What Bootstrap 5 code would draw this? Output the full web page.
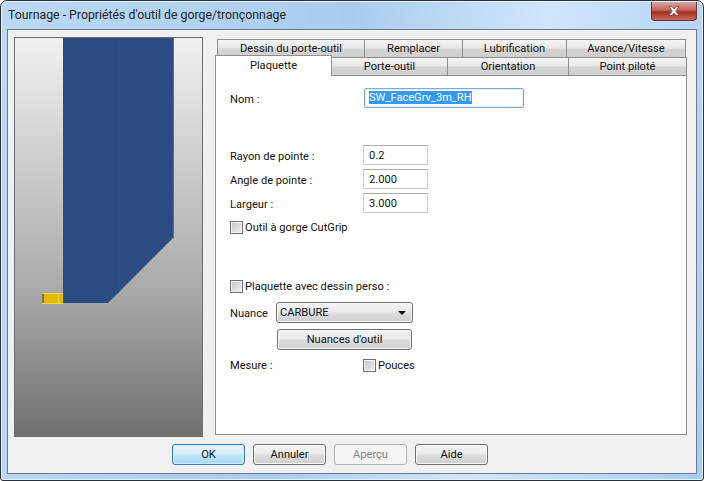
<!DOCTYPE html>
<html lang="fr">
<head>
<meta charset="utf-8">
<title>Tournage</title>
<link href="https://cdn.jsdelivr.net/npm/bootstrap@5.3.0/dist/css/bootstrap.min.css" rel="stylesheet">
<style>
html,body{margin:0;height:100%;background:#fff;overflow:hidden}
body{font:11.100px/15px Roboto,Lato,sans-serif;color:#111}
.win{width:704px;height:481px;border:1px solid #2c3138;border-radius:7px 7px 3px 3px;padding:0 6px 6px;background:linear-gradient(100deg,#bcd9f2 0%,#a9cdee 45%,#cfe6fb 70%,#a8cdf0 100%);box-shadow:inset 0 0 0 1px #e6f1fb}
.wbar{height:28px;padding:7px 1px 0;font-size:12.300px;color:#222}
.xbtn{position:absolute;right:6px;top:1px;width:46px;height:19px;border:1px solid #6b3030;border-top:0;border-radius:0 0 4px 4px;background:linear-gradient(#d8a69e,#c4645a 45%,#a52e22 55%,#c66a5c);display:flex;align-items:center;justify-content:center}
.client{height:445px;background:#f0f0f0;border:1px solid #6e7a8a;padding:7px 9px 0 6px}
.upper{height:400px}
.preview{width:189px;height:400px;border:1px solid #6d6d6d;background:linear-gradient(#f0f0f0,#a8a8a8 65%,#707070)}
.preview svg{display:block}
.tabbox{width:473px;margin-left:12px;padding-top:2px}
.tabrow{display:flex;height:18px;padding-left:2px;position:relative}
.tabitem{border:1px solid #8f8f8f;border-bottom:0;background:linear-gradient(#f4f4f4,#e8e8e8 45%,#d4d4d4 55%,#cfcfcf);text-align:center;line-height:17px;margin-right:-1px;flex:none}
.tabactive{position:absolute;left:0;top:-2px;height:21px;width:117px;background:#fff;border:1px solid #8f8f8f;border-bottom:0;z-index:2;text-align:center;line-height:19px}
.tabpage{height:360px;background:#fff;border:1px solid #8f8f8f;padding:0 14px;position:relative}
.frow{display:flex;align-items:center}
.lbl{flex:none}
.lblpad{padding-top:2px}
.field{width:65px;height:20px;border:1px solid #ccc;border-top-color:#aaa;padding:0 0 0 5px;font:inherit;color:#111;border-radius:1px;background:#fff;display:block;line-height:20px}
.namefield{width:160px;border:1px solid #7fa9d3;border-radius:2px;padding-left:4px;box-shadow:inset 0 0 0 1px #e2edf7;line-height:18px}
.sel{background:#3399ff;color:#fff}
.chk{width:13px;height:13px;border:1px solid #707070;background:linear-gradient(135deg,#c4c4c4,#f2f2f2);box-shadow:inset 0 0 0 1px #f4f4f4;flex:none;margin-right:2px}
.winbtn{width:73px;height:21px;border:1px solid #707070;border-radius:3px;background:linear-gradient(#f3f3f3,#ebebeb 45%,#dcdcdc 55%,#cfcfcf);box-shadow:inset 0 0 0 1px #f7f7f7;font:inherit;color:#111;padding:0;line-height:17px}
.comboish{width:137px;display:flex;align-items:center;justify-content:space-between;padding:0 4px 0 3px;text-align:left}
.caret-d{width:0;height:0;border:4px solid transparent;border-top:4px solid #111;border-bottom:0;margin-right:2px}
.okbtn{border-color:#3c7fb1;background:linear-gradient(#e9f5fc,#d9eefa 45%,#bee6fd 55%,#a7d9f5);box-shadow:inset 0 0 0 1px #cdeaf9}
.off{border-color:#adb2b5;background:#f4f4f4;color:#838383}
.bottombar{height:37px;padding-top:7px;padding-left:158px;gap:8px}
.h1r{height:20px;margin-top:12px}
.w134{width:134px}
.w133{width:133px}
.mt-a{margin-top:37px}
.mt-b{margin-top:4px}
.mt-c{margin-top:7px}
.mt-d{margin-top:44px}
.mt-e{margin-top:8px}
.mt-f{margin-top:6px}
.mt-g{margin-top:8px}
.w46{width:46px}
.btnpad{margin-left:1px;width:135px}
</style>
</head>
<body>
<div class="win position-relative">
  <div class="wbar">Tournage - Propriétés d'outil de gorge/tronçonnage</div>
  <div class="xbtn"><svg width="14" height="12" viewBox="0 0 14 12"><path d="M2 1.500h3L7 4l2-2.500h3L8.700 6 12 10.500H9L7 8l-2 2.500H2L5.300 6z" fill="#fff" stroke="#7d3a33" stroke-width=".8"/></svg></div>
  <div class="client">
    <div class="upper d-flex">
      <div class="preview flex-none">
        <svg width="187" height="398" viewBox="0 0 187 398">
          <polygon points="48,0 158,0 158,200 93,265 48,265" fill="#2b4c82"/>
          <line x1="103.500" y1="0" x2="103.500" y2="255" stroke="#2c5394" stroke-width="1"/>
          <line x1="158.500" y1="0" x2="158.500" y2="200" stroke="#4a6ea8" stroke-width="1"/>
          <rect x="27" y="255" width="21" height="11" fill="#e2bb06"/>
          <rect x="27" y="256" width="2" height="9" fill="#77736a"/>
          <line x1="27" y1="255.500" x2="48" y2="255.500" stroke="#f3d640"/>
          <line x1="27" y1="265.500" x2="48" y2="265.500" stroke="#f3d640"/>
          <line x1="43.500" y1="256" x2="43.500" y2="266" stroke="#f3d640"/>
        </svg>
      </div>
      <div class="tabbox">
        <div class="tabrow">
          <div class="tabitem" style="width:148px">Dessin du porte-outil</div>
          <div class="tabitem" style="width:99px">Remplacer</div>
          <div class="tabitem" style="width:105px">Lubrification</div>
          <div class="tabitem" style="width:120px">Avance/Vitesse</div>
        </div>
        <div class="tabrow" style="padding-left:116px">
          <div class="tabactive">Plaquette</div>
          <div class="tabitem" style="width:117px">Porte-outil</div>
          <div class="tabitem" style="width:122px">Orientation</div>
          <div class="tabitem" style="width:119px">Point piloté</div>
        </div>
        <div class="tabpage">
          <div class="frow h1r"><span class="lbl lblpad w134">Nom :</span><span class="field namefield"><span class="sel">SW_FaceGrv_3m_RH</span></span></div>
          <div class="frow mt-a"><span class="lbl lblpad w133">Rayon de pointe :</span><span class="field">0.2</span></div>
          <div class="frow mt-b"><span class="lbl lblpad w133">Angle de pointe :</span><span class="field">2.000</span></div>
          <div class="frow mt-b"><span class="lbl lblpad w133">Largeur :</span><span class="field">3.000</span></div>
          <div class="frow mt-c"><span class="chk"></span><span>Outil à gorge CutGrip</span></div>
          <div class="frow mt-d"><span class="chk"></span><span>Plaquette avec dessin perso :</span></div>
          <div class="frow mt-e"><span class="lbl lblpad w46">Nuance</span><div class="winbtn comboish"><span>CARBURE</span><span class="caret-d"></span></div></div>
          <div class="frow mt-f"><span class="w46 flex-none"></span><button type="button" class="winbtn btnpad">Nuances d'outil</button></div>
          <div class="frow mt-g"><span class="lbl w133">Mesure :</span><span class="chk"></span><span>Pouces</span></div>
        </div>
      </div>
    </div>
    <div class="bottombar d-flex">
      <button type="button" class="winbtn okbtn">OK</button>
      <button type="button" class="winbtn">Annuler</button>
      <button type="button" class="winbtn off" disabled>Aperçu</button>
      <button type="button" class="winbtn">Aide</button>
    </div>
  </div>
</div>
<script src="https://cdn.jsdelivr.net/npm/bootstrap@5.3.0/dist/js/bootstrap.bundle.min.js"></script>
</body>
</html>
